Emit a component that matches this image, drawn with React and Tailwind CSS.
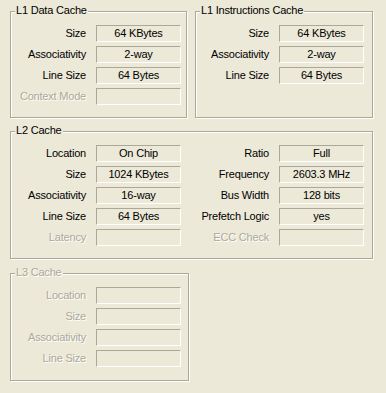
const l1data = [
  ['Size', '64 KBytes'],
  ['Associativity', '2-way'],
  ['Line Size', '64 Bytes'],
  ['Context Mode', null],
];

const l1inst = [
  ['Size', '64 KBytes'],
  ['Associativity', '2-way'],
  ['Line Size', '64 Bytes'],
];

const l2left = [
  ['Location', 'On Chip'],
  ['Size', '1024 KBytes'],
  ['Associativity', '16-way'],
  ['Line Size', '64 Bytes'],
  ['Latency', null],
];

const l2right = [
  ['Ratio', 'Full'],
  ['Frequency', '2603.3 MHz'],
  ['Bus Width', '128 bits'],
  ['Prefetch Logic', 'yes'],
  ['ECC Check', null],
];

const l3 = [
  ['Location', null],
  ['Size', null],
  ['Associativity', null],
  ['Line Size', null],
];

const dim = 'text-[#aca899] [text-shadow:1px_1px_0_#fff]';

function Group({ title, disabled, className, children }) {
  return (
    <div
      className={`relative border border-[#aca899] shadow-[inset_1px_1px_0_#fff,1px_1px_0_#fff] pt-[13px] ${className}`}
    >
      <span
        className={`absolute left-[4px] top-[-9px] bg-[#ece9d8] px-[1px] leading-[14px] ${disabled ? dim : 'text-black'}`}
      >
        {title}
      </span>
      {children}
    </div>
  );
}

function Rows({ rows, labelW, disabled }) {
  return (
    <div className="flex flex-col gap-[4px]">
      {rows.map(([label, value]) => {
        const off = disabled || value === null;
        return (
          <div key={label} className="flex items-center gap-[10px]">
            <span className={`text-right leading-[17px] whitespace-nowrap ${labelW} ${off ? dim : 'text-black'}`}>
              {label}
            </span>
            <div className="h-[17px] w-[85px] border border-t-[#aca899] border-l-[#aca899] border-b-white border-r-white text-center leading-[15px] text-black">
              {value}
            </div>
          </div>
        );
      })}
    </div>
  );
}

export default function App() {
  return (
    <div className="h-[393px] w-[386px] bg-[#ece9d8] pl-[10px] pt-[11px] font-['Liberation_Sans',Arial,sans-serif] text-[11px] tracking-[-0.2px]">
      <div className="flex gap-[8px]">
        <Group title="L1 Data Cache" className="h-[107px] w-[177px]">
          <Rows rows={l1data} labelW="w-[75px]" />
        </Group>
        <Group title="L1 Instructions Cache" className="h-[107px] w-[178px]">
          <Rows rows={l1inst} labelW="w-[73px]" />
        </Group>
      </div>

      <Group title="L2 Cache" className="mt-[13px] h-[128px] w-[363px]">
        <div className="flex gap-[15px]">
          <Rows rows={l2left} labelW="w-[75px]" />
          <Rows rows={l2right} labelW="w-[73px]" />
        </div>
      </Group>

      <Group title="L3 Cache" disabled className="mt-[14px] h-[108px] w-[179px]">
        <Rows rows={l3} labelW="w-[75px]" disabled />
      </Group>
    </div>
  );
}
